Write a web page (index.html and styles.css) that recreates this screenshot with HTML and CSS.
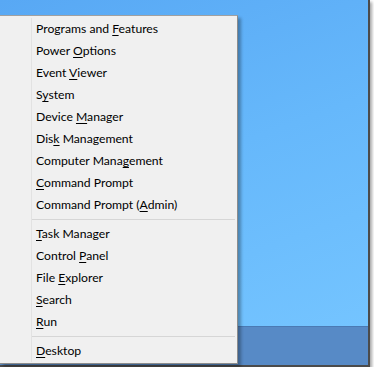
FILE: index.html
```html
<!DOCTYPE html>
<html lang="en">
    <head>
        <meta charset="UTF-8">
        <title>Quick Link Menu</title>
        <link rel="stylesheet" href="styles.css">
    </head>
    <body>
        <div class="screen">
            <div class="desktop">
            </div>
            <div class="taskbar">
            </div>
            <div class="menu">
                <ul class="menu-list">
                    <li class="menu-item">Programs and <u>F</u>eatures</li>
                    <li class="menu-item">Power <u>O</u>ptions</li>
                    <li class="menu-item">Event <u>V</u>iewer</li>
                    <li class="menu-item">S<u>y</u>stem</li>
                    <li class="menu-item">Device <u>M</u>anager</li>
                    <li class="menu-item">Dis<u>k</u> Management</li>
                    <li class="menu-item">Computer Mana<u>g</u>ement</li>
                    <li class="menu-item"><u>C</u>ommand Prompt</li>
                    <li class="menu-item">Command Prompt (<u>A</u>dmin)</li>
                    <li class="menu-separator"></li>
                    <li class="menu-item"><u>T</u>ask Manager</li>
                    <li class="menu-item">Control <u>P</u>anel</li>
                    <li class="menu-item">File <u>E</u>xplorer</li>
                    <li class="menu-item"><u>S</u>earch</li>
                    <li class="menu-item"><u>R</u>un</li>
                    <li class="menu-separator"></li>
                    <li class="menu-item"><u>D</u>esktop</li>
                </ul>
            </div>
        </div>
    </body>
</html>
```

FILE: styles.css
```css
*
{
    margin: 0;
    padding: 0;
    box-sizing: border-box;
}

body
{
    background: #ffffff;
    font-family: "Lato", "Noto Sans", sans-serif;
}

.screen
{
    position: relative;
    display: flex;
    flex-direction: column;

    height: 367px;
    width: 370px;

    border-right: 2px solid #4b4b4b;
    border-bottom: 2px solid #4b4b4b;
    box-shadow: 2px 2px 3px rgba( 0, 0, 0, 0.35 );
}

.desktop
{
    flex: 1;

    background: linear-gradient( 160deg, #58a8f4 0%, #66b8fb 50%, #74c4ff 100% );
}

.taskbar
{
    height: 39px;

    border-top: 1px solid #4a7ab4;
    background: #578ac6;
}

.menu
{
    position: absolute;
    top: 15px;
    left: 0;

    width: 238px;
    padding: 2px 0 1px 0;

    border-top: 1px solid #a0a0a0;
    border-right: 1px solid #8c8c8c;
    border-bottom: 1px solid #8c8c8c;
    background: #f0f0f0;
    box-shadow: 3px 3px 3px rgba( 0, 0, 0, 0.3 );
}

.menu-list
{
    list-style: none;

    margin-left: 31px;
    border-left: 1px solid #e2e2e2;
}

.menu-item
{
    height: 22px;
    padding-left: 4px;

    color: #000000;
    font-size: 12.2px;
    line-height: 22px;
    white-space: nowrap;
}

.menu-item u
{
    text-underline-offset: 2px;
}

.menu-separator
{
    height: 7px;
    margin-right: 2px;

    background: linear-gradient( #d6d6d6, #d6d6d6 ) no-repeat 0 3px / 100% 1px;
}
```
